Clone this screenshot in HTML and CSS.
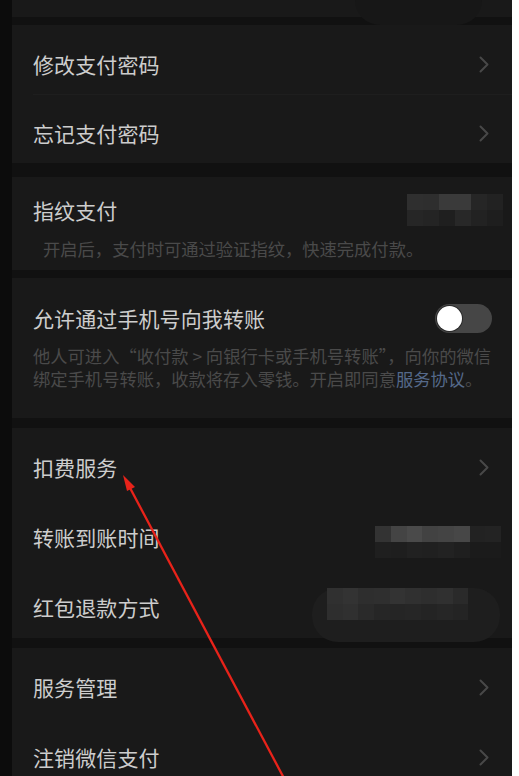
FILE: index.html
```html
<!DOCTYPE html>
<html lang="zh-CN">
<head>
<meta charset="utf-8">
<title>支付设置</title>
<link rel="stylesheet" href="styles.css">
</head>
<body>
<div class="frame">
  <div class="edge"></div>
  <main class="screen">
    <section class="group top-group">
      <div class="smudge smudge-top"></div>
    </section>

    <section class="group g1">
      <div class="row r70 divided">
        <span class="title">修改支付密码</span>
        <span class="chev"><svg width="10" height="17" viewBox="0 0 10 17"><path d="M1.5 1.5 L8.5 8.5 L1.5 15.5" fill="none" stroke="#484848" stroke-width="2" stroke-linecap="round" stroke-linejoin="round"/></svg></span>
      </div>
      <div class="row r68">
        <span class="title">忘记支付密码</span>
        <span class="chev"><svg width="10" height="17" viewBox="0 0 10 17"><path d="M1.5 1.5 L8.5 8.5 L1.5 15.5" fill="none" stroke="#484848" stroke-width="2" stroke-linecap="round" stroke-linejoin="round"/></svg></span>
      </div>
    </section>

    <section class="group g2">
      <div class="line">
        <span class="title">指纹支付</span>
        <div class="pix pix-a">
          <i style="background:#2f2f2f"></i><i style="background:#2e2e2e"></i><i style="background:#3a3a3a"></i><i style="background:#3a3a3a"></i><i style="background:#262626"></i><i style="background:#222"></i>
          <i style="background:#262626"></i><i style="background:#242424"></i><i style="background:#1f1f1f"></i><i style="background:#282828"></i><i style="background:#222"></i><i style="background:#1e1e1e"></i>
        </div>
      </div>
      <p class="desc desc-indent">开启后，支付时可通过验证指纹，快速完成付款。</p>
    </section>

    <section class="group g3">
      <div class="line">
        <span class="title">允许通过手机号向我转账</span>
        <span class="switch"><span class="knob"></span></span>
      </div>
      <p class="desc desc-two"><span class="dl">他人可进入“收付款 &gt; 向银行卡或手机号转账”，向你的微信</span><span class="dl">绑定手机号转账，收款将存入零钱。开启即同意<a class="link">服务协议</a>。</span></p>
    </section>

    <section class="group g4">
      <div class="row r70">
        <span class="title">扣费服务</span>
        <span class="chev"><svg width="10" height="17" viewBox="0 0 10 17"><path d="M1.5 1.5 L8.5 8.5 L1.5 15.5" fill="none" stroke="#484848" stroke-width="2" stroke-linecap="round" stroke-linejoin="round"/></svg></span>
      </div>
      <div class="row r70">
        <span class="title">转账到账时间</span>
        <div class="pix pix-b">
          <i style="background:#333"></i><i style="background:#444"></i><i style="background:#4a4a4a"></i><i style="background:#424242"></i><i style="background:#444"></i><i style="background:#474747"></i><i style="background:#222"></i><i style="background:#232323"></i>
          <i style="background:#1f1f1f"></i><i style="background:#1e1e1e"></i><i style="background:#212121"></i><i style="background:#202020"></i><i style="background:#222"></i><i style="background:#1f1f1f"></i><i style="background:#1b1b1b"></i><i style="background:#1b1b1b"></i>
        </div>
      </div>
      <div class="row r70 rel">
        <span class="title">红包退款方式</span>
        <div class="smudge smudge-c">
          <div class="pix pix-c">
            <i style="background:#303030"></i><i style="background:#333"></i><i style="background:#2e2e2e"></i><i style="background:#2f2f2f"></i><i style="background:#333"></i><i style="background:#303030"></i><i style="background:#2e2e2e"></i><i style="background:#303030"></i><i style="background:#2a2a2a"></i>
            <i style="background:#2e2e2e"></i><i style="background:#303030"></i><i style="background:#2a2a2a"></i><i style="background:#262626"></i><i style="background:#252525"></i><i style="background:#262626"></i><i style="background:#242424"></i><i style="background:#262626"></i><i style="background:#242424"></i>
          </div>
        </div>
      </div>
    </section>

    <section class="group g5">
      <div class="row r70">
        <span class="title">服务管理</span>
        <span class="chev"><svg width="10" height="17" viewBox="0 0 10 17"><path d="M1.5 1.5 L8.5 8.5 L1.5 15.5" fill="none" stroke="#484848" stroke-width="2" stroke-linecap="round" stroke-linejoin="round"/></svg></span>
      </div>
      <div class="row r70">
        <span class="title">注销微信支付</span>
        <span class="chev"><svg width="10" height="17" viewBox="0 0 10 17"><path d="M1.5 1.5 L8.5 8.5 L1.5 15.5" fill="none" stroke="#484848" stroke-width="2" stroke-linecap="round" stroke-linejoin="round"/></svg></span>
      </div>
    </section>
  </main>
  <div class="edge-right"></div>
  <svg class="arrow" width="519" height="776" viewBox="0 0 519 776">
    <line x1="129" y1="486" x2="286" y2="782" stroke="#e8231a" stroke-width="2.3"/>
    <polygon points="123,475 135,487 127,491" fill="#e8231a"/>
  </svg>
</div>
</body>
</html>
```

FILE: styles.css
```css
html, body {
  margin: 0;
  padding: 0;
  background: #ffffff;
  overflow: hidden;
}

body {
  font-family: "Noto Sans CJK SC", "Noto Sans", sans-serif;
}

.frame {
  position: relative;
  display: flex;
  width: 519px;
  height: 776px;
  overflow: hidden;
}

.edge {
  width: 12px;
  flex: 0 0 12px;
  background: #0c0c0c;
}

.edge-right {
  flex: 1 1 auto;
  background: #ffffff;
}

.screen {
  width: 500px;
  flex: 0 0 500px;
  background: #111111;
  display: flex;
  flex-direction: column;
}

.group {
  background: #191919;
  flex: 0 0 auto;
}

.top-group {
  height: 17px;
  position: relative;
  margin-bottom: 8px;
}

.g1 { margin-bottom: 14px; }
.g2 { margin-bottom: 8px; padding: 19px 20px 10px 21px; }
.g3 { margin-bottom: 10px; padding: 26px 20px 28px 21px; }
.g4 { margin-bottom: 10px; }

.row {
  display: flex;
  align-items: center;
  box-sizing: border-box;
  padding: 8px 23px 0 21px;
}

.r70 { height: 70px; }
.r68 { height: 68px; }
.rel { position: relative; }

.divided {
  position: relative;
}
.divided::after {
  content: "";
  position: absolute;
  left: 21px;
  right: 0;
  bottom: 0;
  height: 1px;
  background: #1e1e1e;
}

.title {
  font-size: 21px;
  line-height: 28px;
  color: #cdcdcd;
  letter-spacing: 0.1px;
}

.chev {
  margin-left: auto;
  display: flex;
  width: 10px;
  height: 17px;
}

.line {
  display: flex;
  align-items: center;
  height: 28px;
}

.desc {
  margin: 0;
  font-size: 17.3px;
  line-height: 23px;
  color: #4a4a4a;
}

.dl {
  display: block;
  white-space: nowrap;
}

.g2 .desc { margin-top: 13px; }
.desc-indent { padding-left: 10px; }
.g3 .desc { margin-top: 12px; }

.link { color: #55698a; }

.switch {
  margin-left: auto;
  width: 57px;
  height: 29px;
  border-radius: 15px;
  background: #464646;
  display: flex;
  align-items: center;
  padding-left: 2px;
  box-sizing: border-box;
}

.knob {
  width: 25px;
  height: 25px;
  border-radius: 50%;
  background: #ffffff;
  box-shadow: 0 0 0 1px #2a2a2a;
}

.pix {
  display: grid;
  grid-auto-rows: 16px;
}
.pix i { display: block; }

.pix-a {
  margin-left: auto;
  margin-right: -11px;
  grid-template-columns: repeat(6, 16px);
}

.pix-b {
  margin-left: auto;
  margin-right: -12px;
  margin-top: 10px;
  grid-template-columns: repeat(8, 15.75px);
}

.smudge {
  position: absolute;
}

.smudge-top {
  left: 343px;
  top: 0;
  width: 127px;
  height: 25px;
  background: #171717;
  border-radius: 0 0 40px 40px;
}

.smudge-c {
  left: 300px;
  top: 20px;
  width: 188px;
  height: 54px;
  background: #1e1e1e;
  border-radius: 26px;
}

.pix-c {
  position: absolute;
  left: 15px;
  top: 0;
  grid-template-columns: repeat(9, 15.7px);
}

.arrow {
  position: absolute;
  left: 0;
  top: 0;
  pointer-events: none;
}
```
